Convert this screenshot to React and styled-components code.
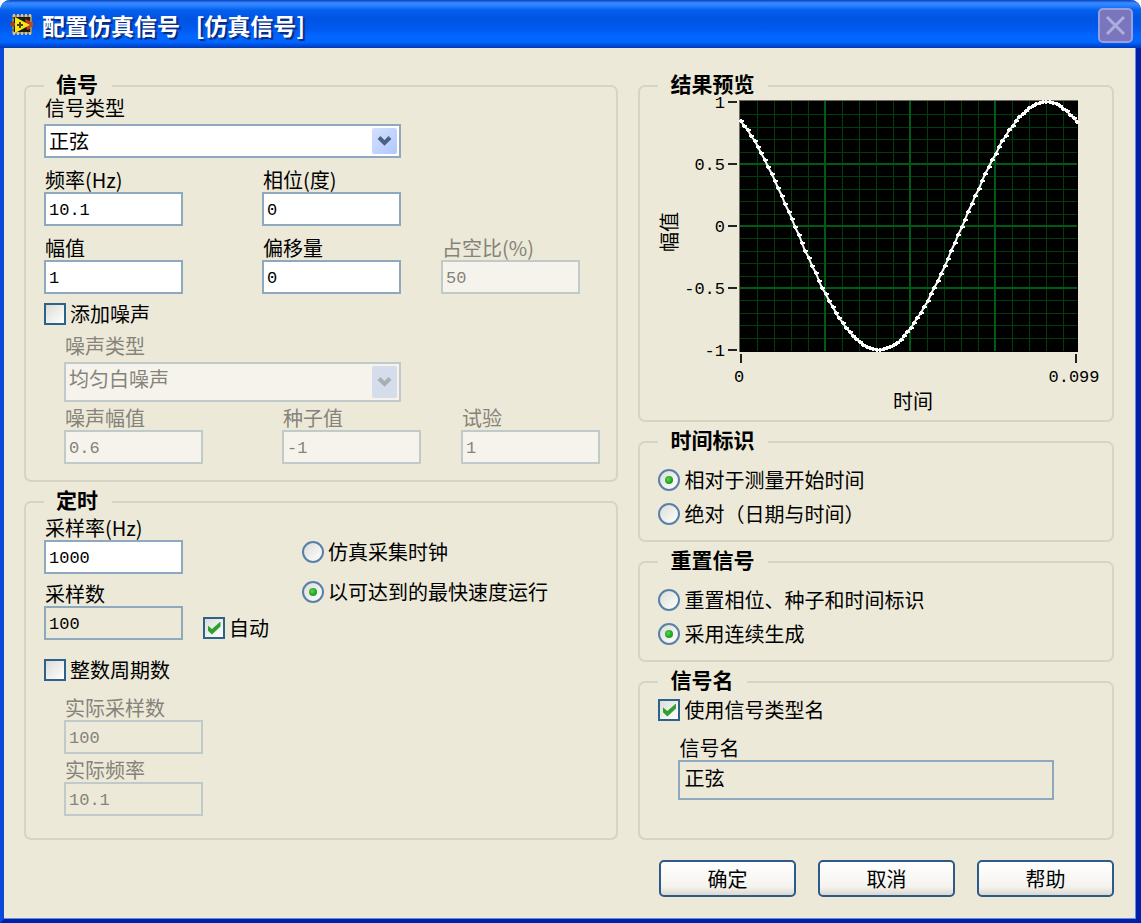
import React, { useState } from 'react'
import styled, { createGlobalStyle } from 'styled-components';

const GlobalStyle = createGlobalStyle`
	* {
		box-sizing: border-box;
	}
	body {
		margin: 0;
		background: #fff;
		color: #000;
		font-family: "Noto Sans CJK SC", sans-serif;
		font-size: 20px;
		line-height: 24px;
	}
	button, input, select {
		font: inherit;
		color: inherit;
	}
`;

const Dialog = styled.form`
	min-height: 100vh;
	display: flex;
	flex-direction: column;
	background: #ece9d8;
	border: solid;
	border-width: 0 5px 4px 4px;
	border-color: #0831d9 #0020a8 #0020a8 #0a48d8;
	border-radius: 10px 10px 0 0;
	box-shadow: inset -1px -1px 0 #5f8ce8;
`;

const TitleBar = styled.header`
	height: 48px;
	margin: 0 -5px 0 -4px;
	padding: 2px 8px 0 10px;
	display: flex;
	align-items: center;
	gap: 8px;
	border-radius: 10px 10px 0 0;
	background: linear-gradient(#0a3fc0 0, #3a8cff 3px, #2480ff 6px, #0560ee 10px, #0054e3 18px, #0058ee 28px, #0066ff 36px, #0066ff 42px, #0048d0 46px, #0038b8 48px);
	svg {
		flex: none;
	}
`;

const Title = styled.h1`
	flex: 1;
	margin: 0;
	font-size: 23px;
	line-height: 28px;
	font-weight: 700;
	color: #fff;
	text-shadow: 2px 2px 1px #0a2a80;
	white-space: pre;
`;

const CloseButton = styled.button`
	width: 35px;
	height: 35px;
	padding: 0;
	display: flex;
	align-items: center;
	justify-content: center;
	border: 2px solid #9a9de0;
	border-radius: 5px;
	background: #7a76bd;
`;

const Body = styled.main`
	flex: 1;
	padding: 28px 22px 22px 20px;
`;

const Columns = styled.div`
	display: grid;
	grid-template-columns: 5fr 4fr;
	gap: 20px;
`;

const Column = styled.div`
	display: flex;
	flex-direction: column;
	gap: 10px;
	min-width: 0;
`;

const Group = styled.fieldset`
	margin: 0;
	min-width: 0;
	padding: 0 ${props => props.$flush ? '0' : '18px'} ${props => props.$bottom || 0}px;
	flex: ${props => props.$grow ? 1 : 'none'};
	border: 2px solid #d6d4c2;
	border-radius: 7px;
`;

const Legend = styled.legend`
	margin-left: ${props => props.$inset || 0}px;
	padding: 0 14px 6px 12px;
	font-size: 21px;
	line-height: 14px;
	font-weight: 700;
`;

const Stack = styled.div`
	display: flex;
	flex-direction: column;
	gap: ${props => props.$gap || 0}px;
	padding-top: ${props => props.$top || 0}px;
	padding-left: ${props => props.$indent || 0}px;
`;

const FieldRow = styled.div`
	display: grid;
	grid-template-columns: 218px 179px 1fr;
`;

const FieldBox = styled.div`
	display: flex;
	flex-direction: column;
	align-items: flex-start;
	gap: ${props => props.$gap || 0}px;
	color: ${props => props.$disabled ? '#85837a' : '#000'};
	label {
		padding-left: 1px;
	}
`;

const TextBox = styled.input`
	width: ${props => props.$wide ? '376px' : '139px'};
	max-width: 100%;
	height: ${props => props.$wide ? '40px' : '34px'};
	padding: ${props => props.$wide ? '0 4px 6px' : '2px 4px 0 3px'};
	border: 2px solid #8ea9bd;
	border-radius: 0;
	background: #fff;
	font-family: ${props => props.$wide ? 'inherit' : '"Liberation Mono", monospace'};
	font-size: ${props => props.$wide ? '20px' : '17px'};
	&:read-only {
		background: #ece9d8;
	}
	&:disabled {
		background: ${props => props.$plain ? '#ece9d8' : '#f5f3ec'};
		border-color: #bfcac9;
	}
`;

const SelectBox = styled.div`
	position: relative;
	width: ${props => props.$width}px;
	max-width: 100%;
	svg {
		position: absolute;
		top: 4px;
		right: 4px;
		height: calc(100% - 8px);
		pointer-events: none;
		border-radius: 2px;
		background: ${props => props.$disabled ? '#d5dcec' : 'linear-gradient(135deg, #d3e0ff, #b3c8fa)'};
	}
`;

const Select = styled.select`
	display: block;
	appearance: none;
	width: 100%;
	height: ${props => props.$tall ? '40px' : '34px'};
	padding: 0 32px 0 3px;
	border: 2px solid #8ea9bd;
	border-radius: 0;
	background: #fff;
	&:disabled {
		opacity: 1;
		padding-bottom: 6px;
		background: #f5f3ec;
		border-color: #bfcac9;
	}
`;

const Choice = styled.label`
	display: flex;
	align-items: center;
	gap: 4px;
	height: 24px;
	white-space: nowrap;
`;

const CheckInput = styled.input`
	appearance: none;
	flex: none;
	width: 22px;
	height: 22px;
	margin: 0;
	border: 2px solid #2c628b;
	background: linear-gradient(135deg, #dcdcd7, #fff);
	display: grid;
	place-items: center;
	&:checked::before {
		content: "";
		width: 13px;
		height: 13px;
		background: #2fa02f;
		clip-path: polygon(0 28%, 34% 58%, 100% 0, 100% 38%, 34% 100%, 0 68%);
	}
`;

const RadioInput = styled.input`
	appearance: none;
	flex: none;
	width: 22px;
	height: 22px;
	margin: 0;
	border: 2px solid #5980a8;
	border-radius: 50%;
	background: linear-gradient(135deg, #dcdcd7, #fff);
	display: grid;
	place-items: center;
	&:checked::before {
		content: "";
		width: 8px;
		height: 8px;
		border-radius: 50%;
		background: radial-gradient(circle at 40% 40%, #55d551, #21a121 60%);
	}
`;

const TimingColumns = styled.div`
	display: grid;
	grid-template-columns: 258px 1fr;
`;

const SampleRow = styled.div`
	display: flex;
	align-items: flex-end;
	gap: 20px;
`;

const Chart = styled.svg`
	display: block;
	max-width: 100%;
	overflow: visible;
	text {
		font-size: 20px;
	}
	.number {
		font-family: "Liberation Mono", monospace;
		font-size: 17px;
	}
`;

const Actions = styled.footer`
	display: flex;
	justify-content: flex-end;
	gap: 22px;
	margin-top: 20px;
`;

const Button = styled.button`
	width: 137px;
	height: 37px;
	padding: 0;
	border: 2px solid #2d5a88;
	border-radius: 5px;
	background: linear-gradient(#fff, #f4f3ee 75%, #dcd8ce);
`;

const Field = ({ id, label, gap, disabled, ...rest }) => (
	<FieldBox $gap={gap} $disabled={disabled}>
		<label htmlFor={id}>{label}</label>
		<TextBox id={id} type="text" disabled={disabled} {...rest} />
	</FieldBox>
)

const DropDown = ({ id, label, options, width, tall, disabled }) => (
	<FieldBox $gap={4} $disabled={disabled}>
		<label htmlFor={id}>{label}</label>
		<SelectBox $width={width} $disabled={disabled}>
			<Select id={id} $tall={tall} disabled={disabled}>
				{options.map(option => <option key={option}>{option}</option>)}
			</Select>
			<svg width="25" viewBox="0 0 25 25">
				<path d="M7 9l5.500 5.500 5.500-5.500" fill="none" stroke={disabled ? '#a9aeb4' : '#4a6185'} strokeWidth="4" />
			</svg>
		</SelectBox>
	</FieldBox>
)

const Check = ({ label, ...rest }) => (
	<Choice>
		<CheckInput type="checkbox" {...rest} />
		{label}
	</Choice>
)

const RadioList = ({ name, options, initial }) => {
	const [value, setValue] = useState(initial)

	return options.map(option =>
		<Choice key={option}>
			<RadioInput type="radio" name={name} checked={value === option} onChange={() => setValue(option)} />
			{option}
		</Choice>
	)
}

const AppIcon = () => (
	<svg width="24" height="24" viewBox="0 0 24 24">
		<rect x="2" y="2" width="20" height="19" fill="#8f8b6c" />
		<path d="M3 2.500h19M3 20.500h19" stroke="#c9c4a4" strokeWidth="3" strokeDasharray="2 2" />
		<path d="M3 4v16" stroke="#6a6850" strokeWidth="2" strokeDasharray="2 2" />
		<rect x="4" y="4" width="16" height="15" fill="#1c1c10" />
		<path d="M0 10h5v3H0z" fill="#a8401c" />
		<path d="M15 6l5 2v8l-3 1z" fill="#c8381c" />
		<path d="M20 9h3v5h-3z" fill="#b84a20" />
		<path d="M5 4l15 8-15 8z" fill="#f4e81c" />
		<path d="M7 12h6M10 9v6" stroke="#4a4200" strokeWidth="2" />
	</svg>
)

// plot area: x 100..437, y 4..255; amplitude 1 is at y 6 and -1 at y 254
const toY = value => Math.round(130 - value * 124)
const lines = Array.from({ length: 19 }, (_, i) => i + 1)
const levels = [1, 0.5, 0, -0.5, -1]
const samples = Array.from({ length: 100 }, (_, i) => {
	const x = 101 + i * 336 / 99
	return [Math.round(x), toY(Math.cos((x - 406) * 2 * Math.PI / 335))]
})

const Preview = () => (
	<Chart width="471" height="324" viewBox="0 0 471 324" role="img" aria-label="结果预览">
		<rect x="99" y="4" width="339" height="252" fill="#000" />
		<g shapeRendering="crispEdges">
			{lines.filter(i => i % 5).map(i =>
				<path key={i} d={`M${100 + i * 17} 5V255M100 ${toY(1 - i / 10)}H437`} stroke="#003d0c" strokeWidth="1" />
			)}
			{[5, 10, 15].map(i =>
				<path key={i} d={`M${100 + i * 17} 5V255M100 ${toY(1 - i / 10)}H437`} stroke="#005c14" strokeWidth="2" />
			)}
			<path d="M99 256V4H438" fill="none" stroke="#6e6c62" strokeWidth="1" />
			{levels.map(v => <path key={v} d={`M88 ${toY(v)}h9`} stroke="#222" strokeWidth="2" />)}
			<path d="M101 258v9M436 258v9" stroke="#222" strokeWidth="2" />
		</g>
		<polyline points={samples.map(p => p.join(',')).join(' ')} fill="none" stroke="#fff" strokeWidth="2" />
		<path d={samples.map(([x, y]) => `M${x - 2} ${y}h5M${x} ${y - 2}v4`).join('')} stroke="#fff" strokeWidth="2" />
		{levels.map(v =>
			<text key={v} className="number" x="85" y={toY(v) + 6} textAnchor="end">{v}</text>
		)}
		<text className="number" x="99" y="286" textAnchor="middle">0</text>
		<text className="number" x="434" y="286" textAnchor="middle">0.099</text>
		<text x="273" y="313" textAnchor="middle">时间</text>
		<text x="0" y="0" textAnchor="middle" transform="translate(37 136) rotate(-90)">幅值</text>
	</Chart>
)

const App = () => {
	return (
		<>
			<GlobalStyle />
			<Dialog onSubmit={e => e.preventDefault()}>
				<TitleBar>
					<AppIcon />
					<Title>{'配置仿真信号   [仿真信号]'}</Title>
					<CloseButton type="button" aria-label="关闭">
						<svg width="21" height="21" viewBox="0 0 21 21">
							<path d="M2 2l17 17M19 2L2 19" stroke="#aeaddd" strokeWidth="3" />
						</svg>
					</CloseButton>
				</TitleBar>
				<Body>
					<Columns>
						<Column>
							<Group $bottom={16}>
								<Legend>信号</Legend>
								<Stack $gap={10}>
									<DropDown id="signal-type" label="信号类型" options={['正弦']} width={357} />
									<FieldRow>
										<Field id="frequency" label="频率(Hz)" defaultValue="10.1" />
										<Field id="phase" label="相位(度)" defaultValue="0" />
									</FieldRow>
									<FieldRow>
										<Field id="amplitude" label="幅值" defaultValue="1" />
										<Field id="offset" label="偏移量" defaultValue="0" />
										<Field id="duty" label="占空比(%)" defaultValue="50" disabled />
									</FieldRow>
								</Stack>
								<Stack $top={8} $gap={8}>
									<Check label="添加噪声" />
									<Stack $gap={4} $indent={20}>
										<DropDown id="noise-type" label="噪声类型" options={['均匀白噪声']} width={337} tall disabled />
										<FieldRow>
											<Field id="noise-amplitude" label="噪声幅值" defaultValue="0.6" disabled />
											<Field id="seed" label="种子值" defaultValue="-1" disabled />
											<Field id="trials" label="试验" defaultValue="1" disabled />
										</FieldRow>
									</Stack>
								</Stack>
							</Group>
							<Group $bottom={22} $grow>
								<Legend>定时</Legend>
								<TimingColumns>
									<Stack $top={4} $gap={8}>
										<Field id="rate" label="采样率(Hz)" defaultValue="1000" />
										<SampleRow>
											<Field id="samples" label="采样数" defaultValue="100" readOnly />
											<Check label="自动" defaultChecked />
										</SampleRow>
									</Stack>
									<Stack $top={28} $gap={16}>
										<RadioList
											name="clock"
											options={['仿真采集时钟', '以可达到的最快速度运行']}
											initial="以可达到的最快速度运行"
										/>
									</Stack>
								</TimingColumns>
								<Stack $top={18} $gap={14}>
									<Check label="整数周期数" />
									<Stack $gap={4} $indent={20}>
										<Field id="actual-samples" label="实际采样数" defaultValue="100" $plain disabled />
										<Field id="actual-frequency" label="实际频率" defaultValue="10.1" $plain disabled />
									</Stack>
								</Stack>
							</Group>
						</Column>
						<Column>
							<Group $flush>
								<Legend $inset={18}>结果预览</Legend>
								<Preview />
							</Group>
							<Group $bottom={14}>
								<Legend>时间标识</Legend>
								<Stack $top={16} $gap={10}>
									<RadioList
										name="timestamp"
										options={['相对于测量开始时间', '绝对（日期与时间）']}
										initial="相对于测量开始时间"
									/>
								</Stack>
							</Group>
							<Group $bottom={14}>
								<Legend>重置信号</Legend>
								<Stack $top={16} $gap={10}>
									<RadioList
										name="reset"
										options={['重置相位、种子和时间标识', '采用连续生成']}
										initial="采用连续生成"
									/>
								</Stack>
							</Group>
							<Group $grow>
								<Legend>信号名</Legend>
								<Stack $top={6} $gap={14}>
									<Check label="使用信号类型名" defaultChecked />
									<Stack $indent={20}>
										<Field id="signal-name" label="信号名" defaultValue="正弦" $wide readOnly />
									</Stack>
								</Stack>
							</Group>
						</Column>
					</Columns>
					<Actions>
						<Button type="submit">确定</Button>
						<Button type="button">取消</Button>
						<Button type="button">帮助</Button>
					</Actions>
				</Body>
			</Dialog>
		</>
	)
}

export default App;
